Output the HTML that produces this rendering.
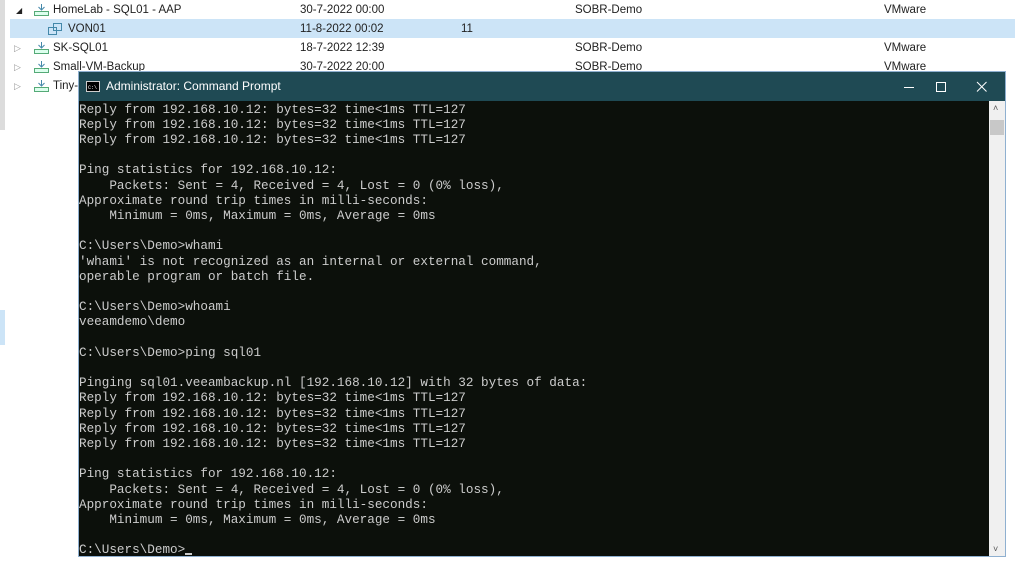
<!DOCTYPE html>
<html><head><meta charset="utf-8"><style>
body{margin:0;width:1024px;height:565px;overflow:hidden;background:#fff;font-family:"Liberation Sans",sans-serif;position:relative}
.row{position:absolute;left:0;width:1015px;height:19px;font-size:11.5px;color:#222;line-height:21px}
.row span{position:absolute}
.sel{background:#cce4f7}
.ico{position:absolute;width:15px;height:12px;top:4px}
#win{position:absolute;left:78px;top:71px;width:928px;height:486px;background:#0c100b;border:1px solid #8fb0d0;box-sizing:border-box}
#title{position:absolute;left:0;top:0;right:0;height:29px;background:#1f4a54;color:#fff;font-size:12px;line-height:29px}
#con{position:absolute;left:0;top:29px;width:911px;bottom:0;font-family:"Liberation Mono",monospace;font-size:12.65px;line-height:15.2px;color:#cccccc;white-space:pre;padding-top:0.5px}
#sb{position:absolute;right:0;top:29px;width:16px;bottom:0;background:#f0f0f0}
</style></head><body>
<div style="position:absolute;left:0;top:0;width:5px;height:130px;background:#dcdcdc"></div>
<div style="position:absolute;left:0;top:310px;width:5px;height:35px;background:#cce4f7"></div>
<div class="row" style="top:0"><span style="left:16px;font-size:8px">◢</span><svg class="ico" style="left:34px" viewBox="0 0 15 12"><rect x="0.5" y="7.5" width="14" height="4" fill="#dfe" stroke="#5a7"/><path d="M7.5 0v6M4.5 3l3 3 3-3" stroke="#48a" fill="none"/></svg><span style="left:53px">HomeLab - SQL01 - AAP</span><span style="left:300px">30-7-2022 00:00</span><span style="left:575px">SOBR-Demo</span><span style="left:884px">VMware</span></div>
<div class="row sel" style="top:19px;left:10px;width:1005px"><svg class="ico" style="left:38px" viewBox="0 0 15 12"><rect x="0.5" y="4.5" width="8" height="7" fill="none" stroke="#48a"/><rect x="5.5" y="0.5" width="8" height="7" fill="none" stroke="#48a"/></svg><span style="left:58px">VON01</span><span style="left:290px">11-8-2022 00:02</span><span style="left:451px">11</span></div>
<div class="row" style="top:38px"><span style="left:14px;color:#999;font-size:9px">▷</span><svg class="ico" style="left:34px" viewBox="0 0 15 12"><rect x="0.5" y="7.5" width="14" height="4" fill="#dfe" stroke="#5a7"/><path d="M7.5 0v6M4.5 3l3 3 3-3" stroke="#48a" fill="none"/></svg><span style="left:53px">SK-SQL01</span><span style="left:300px">18-7-2022 12:39</span><span style="left:575px">SOBR-Demo</span><span style="left:884px">VMware</span></div>
<div class="row" style="top:57px"><span style="left:14px;color:#999;font-size:9px">▷</span><svg class="ico" style="left:34px" viewBox="0 0 15 12"><rect x="0.5" y="7.5" width="14" height="4" fill="#dfe" stroke="#5a7"/><path d="M7.5 0v6M4.5 3l3 3 3-3" stroke="#48a" fill="none"/></svg><span style="left:53px">Small-VM-Backup</span><span style="left:300px">30-7-2022 20:00</span><span style="left:575px">SOBR-Demo</span><span style="left:884px">VMware</span></div>
<div class="row" style="top:76px"><span style="left:14px;color:#999;font-size:9px">▷</span><svg class="ico" style="left:34px" viewBox="0 0 15 12"><rect x="0.5" y="7.5" width="14" height="4" fill="#dfe" stroke="#5a7"/><path d="M7.5 0v6M4.5 3l3 3 3-3" stroke="#48a" fill="none"/></svg><span style="left:53px">Tiny-</span></div>
<div id="win">
<div id="title"><svg style="position:absolute;left:7px;top:9px" width="14" height="11" viewBox="0 0 14 11"><rect x="0.5" y="0.5" width="13" height="10" fill="#000" stroke="#ccc"/><text x="2" y="8" fill="#fff" font-size="5" font-family="Liberation Mono">C:\</text></svg><span style="position:absolute;left:27px">Administrator: Command Prompt</span>
<svg style="position:absolute;left:820px;top:8px" width="100" height="14" viewBox="0 0 100 14"><path d="M5 7.5h10" stroke="#fff"/><rect x="37.5" y="2.5" width="9" height="9" fill="none" stroke="#fff"/><path d="M78 2l9.5 9.5M87.5 2L78 11.5" stroke="#fff"/></svg></div>
<div id="con">Reply from 192.168.10.12: bytes=32 time&lt;1ms TTL=127
Reply from 192.168.10.12: bytes=32 time&lt;1ms TTL=127
Reply from 192.168.10.12: bytes=32 time&lt;1ms TTL=127

Ping statistics for 192.168.10.12:
    Packets: Sent = 4, Received = 4, Lost = 0 (0% loss),
Approximate round trip times in milli-seconds:
    Minimum = 0ms, Maximum = 0ms, Average = 0ms

C:\Users\Demo&gt;whami
'whami' is not recognized as an internal or external command,
operable program or batch file.

C:\Users\Demo&gt;whoami
veeamdemo\demo

C:\Users\Demo&gt;ping sql01

Pinging sql01.veeambackup.nl [192.168.10.12] with 32 bytes of data:
Reply from 192.168.10.12: bytes=32 time&lt;1ms TTL=127
Reply from 192.168.10.12: bytes=32 time&lt;1ms TTL=127
Reply from 192.168.10.12: bytes=32 time&lt;1ms TTL=127
Reply from 192.168.10.12: bytes=32 time&lt;1ms TTL=127

Ping statistics for 192.168.10.12:
    Packets: Sent = 4, Received = 4, Lost = 0 (0% loss),
Approximate round trip times in milli-seconds:
    Minimum = 0ms, Maximum = 0ms, Average = 0ms

C:\Users\Demo&gt;<span style="display:inline-block;width:7px;height:2px;background:#ccc;vertical-align:-2px"></span></div>
<div id="sb"><span style="position:absolute;left:4px;top:2px;font-size:9px;color:#555">˄</span><div style="position:absolute;left:1px;top:19px;width:14px;height:15px;background:#c8c8c8"></div><span style="position:absolute;left:4px;bottom:2px;font-size:9px;color:#555">˅</span></div>
</div>
</body></html>
